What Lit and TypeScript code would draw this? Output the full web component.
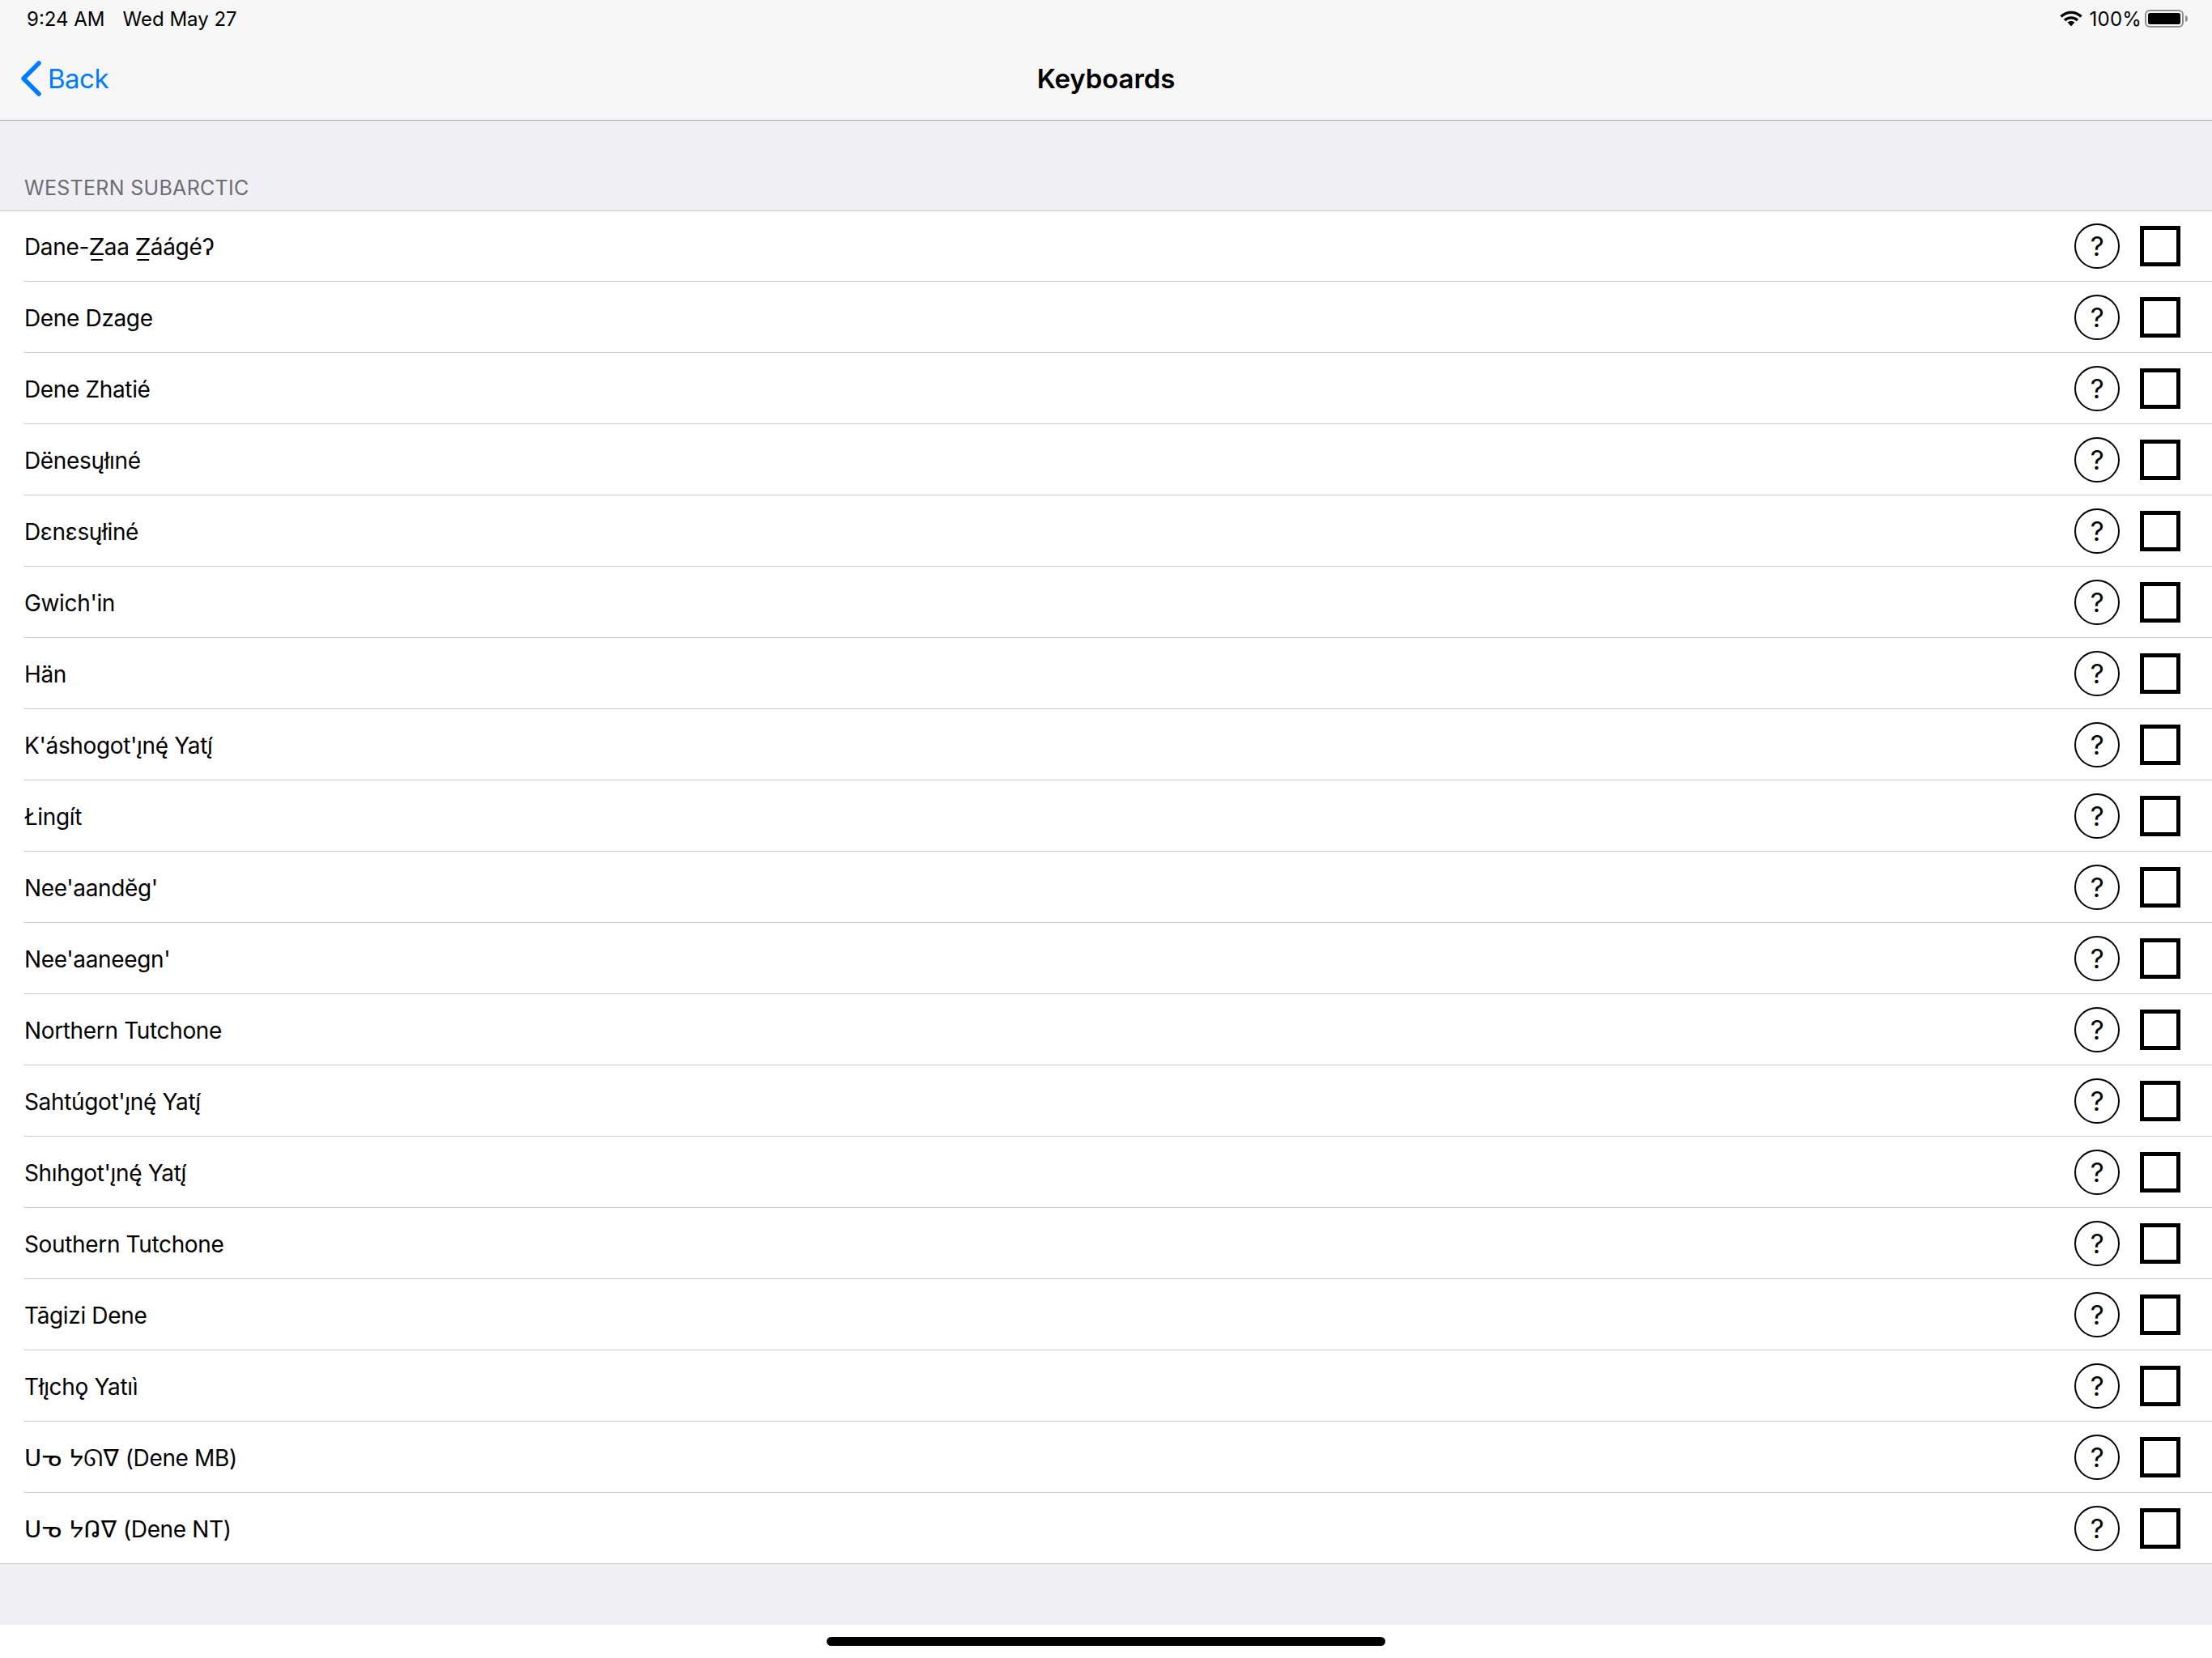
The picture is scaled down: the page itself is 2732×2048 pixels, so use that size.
import { LitElement, html, css } from "lit";
import { customElement } from "lit/decorators.js";

const ROWS: { text: string; syl?: string }[] = [
  { text: "Dane-Z̲aa Z̲áágéʔ" }, { text: "Dene Dzage" }, { text: "Dene Zhatié" }, { text: "Dënesųłıné" },
  { text: "Dɛnɛsųłiné" }, { text: "Gwich'in" }, { text: "Hän" }, { text: "K'áshogot'ı̨nę́ Yatı̨́" },
  { text: "Łingít" }, { text: "Nee'aandĕg'" }, { text: "Nee'aaneegn'" }, { text: "Northern Tutchone" },
  { text: "Sahtúgot'ı̨nę́ Yatı̨́" }, { text: "Shıhgot'ı̨nę́ Yatı̨́" }, { text: "Southern Tutchone" },
  { text: "Tāgizi Dene" }, { text: "Tłı̨chǫ Yatıì" },
  { syl: "ᑌᓀ ᔭᘏᐁ", text: " (Dene MB)" }, { syl: "ᑌᓀ ᔭᕡᐁ", text: " (Dene NT)" },
];

@customElement("app-root")
export class AppRoot extends LitElement {
  static styles = css`
    :host { display: block; width: 2732px; height: 2048px; background: #fff; font-family: Inter, "DejaVu Sans", sans-serif; color: #000; overflow: hidden; }
    .chrome { background: #f6f6f6; border-bottom: 1px solid #a7a7aa; height: 148px; display: flex; flex-direction: column; }
    .status { height: 40px; padding: 6px 29px 0 33px; display: flex; align-items: center; justify-content: space-between; font-size: 24px; box-sizing: border-box; }
    .status .left { display: flex; gap: 22px; }
    .status .right { display: flex; align-items: center; gap: 4px; }
    .status .pct { letter-spacing: 0.2px; margin-left: 5px; }
    .nav { flex: 1; display: grid; grid-template-columns: 1fr auto 1fr; align-items: center; padding-top: 6px; }
    .back { display: flex; align-items: center; gap: 8px; padding-left: 26px; color: #007aff; font-size: 33px; letter-spacing: -0.5px; }
    .title { font-size: 33px; font-weight: 600; letter-spacing: -0.1px; }
    .section { background: #efeff4; height: 112px; box-sizing: border-box; padding: 0 30px 13px; display: flex; align-items: flex-end; color: #6d6d72; font-size: 25px; letter-spacing: 0.3px; border-bottom: 1px solid #c8c7cc; }
    .row { height: 88px; box-sizing: border-box; margin-left: 30px; padding: 2px 39px 0 0; display: flex; align-items: center; justify-content: space-between; border-bottom: 1px solid #c8c7cc; font-size: 28px; letter-spacing: -0.35px; }
    .row.first { height: 87px; padding-top: 1px; }
    .row.last { margin-left: 0; padding-left: 30px; }
    .syl { font-family: "DejaVu Sans", sans-serif; font-size: 29px; line-height: 1; letter-spacing: 0; }
    .ctrls { display: flex; align-items: center; gap: 25px; margin-top: -2px; }
    .first .ctrls { margin-top: -1px; }
    .help { width: 56px; height: 56px; box-sizing: border-box; border: 2px solid #000; border-radius: 50%; display: flex; align-items: center; justify-content: center; font-size: 33px; }
    .check { width: 50px; height: 50px; box-sizing: border-box; border: 5px solid #000; }
    .foot { background: #efeff4; height: 75px; }
    .homewrap { display: flex; justify-content: center; padding-top: 15px; }
    .home { width: 690px; height: 11px; border-radius: 6px; background: #000; }
  `;

  render() {
    return html`
      <div class="chrome">
        <div class="status">
          <div class="left"><span>9:24 AM</span><span>Wed May 27</span></div>
          <div class="right">
            <svg width="28" height="20" viewBox="0 0 28 20"><path d="M1.500 7.500C8.500 .6 19.500 .6 26.500 7.500M6 12C10.500 7.800 17.500 7.800 22 12" fill="none" stroke="#000" stroke-width="3.400"/><path d="M9.500 14.500C12 12.400 16 12.400 18.500 14.500L14 19.500Z"/></svg>
            <span class="pct">100%</span>
            <svg width="54" height="22" viewBox="0 0 54 22"><rect x="1" y="1" width="46" height="20" rx="5" fill="none" stroke="#8e8e8e" stroke-width="2"/><rect x="4" y="4" width="40" height="14" rx="2.500"/><path d="M50 7C52 7.500 53 9 53 11S52 14.500 50 15Z" fill="#8e8e8e"/></svg>
          </div>
        </div>
        <div class="nav">
          <div class="back"><svg width="25" height="44" viewBox="0 0 25 44"><path d="M22 3L3 22L22 41" fill="none" stroke="#007aff" stroke-width="5.500" stroke-linecap="round" stroke-linejoin="round"/></svg><span>Back</span></div>
          <div class="title">Keyboards</div>
          <div></div>
        </div>
      </div>
      <div class="section">WESTERN SUBARCTIC</div>
      ${ROWS.map((r, i) => html`<div class="row ${i === 0 ? "first" : ""} ${i === ROWS.length - 1 ? "last" : ""}"><span>${r.syl ? html`<span class="syl">${r.syl}</span>` : ""}${r.text}</span><div class="ctrls"><div class="help">?</div><div class="check"></div></div></div>`)}
      <div class="foot"></div>
      <div class="homewrap"><div class="home"></div></div>
    `;
  }
}
